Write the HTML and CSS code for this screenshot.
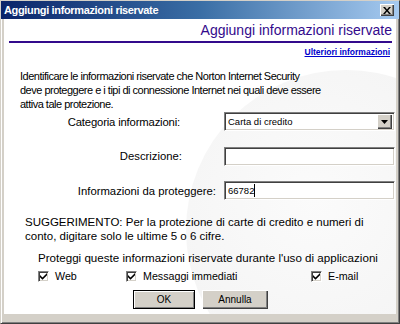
FILE: index.html
```html
<!DOCTYPE html>
<html>
<head>
<meta charset="utf-8">
<link rel="stylesheet" href="styles.css">
</head>
<body>
<div class="window">
  <div class="titlebar">
    <span class="title">Aggiungi informazioni riservate</span>
    <span class="close">
      <svg width="8" height="7" viewBox="0 0 8 7"><path d="M0 0h2l2 2.5L6 0h2L5 3.5 8 7H6L4 4.5 2 7H0l3-3.5z" fill="#000"/></svg>
    </span>
  </div>
  <div class="body">
    <div class="globe"></div>
    <div class="header">
      <h1 class="heading">Aggiungi informazioni riservate</h1>
    </div>
    <div class="more"><a href="#">Ulteriori informazioni</a></div>
    <p class="intro">Identificare le informazioni riservate che Norton Internet Security<br>deve proteggere e i tipi di connessione Internet nei quali deve essere<br>attiva tale protezione.</p>
    <div class="form">
      <div class="row">
        <span class="label label-cat">Categoria informazioni:</span>
        <div class="select">
          <span class="select-text">Carta di credito</span>
          <span class="arrow"><svg width="7" height="4" viewBox="0 0 7 4"><path d="M0 0h7L3.5 4z" fill="#000"/></svg></span>
        </div>
      </div>
      <div class="row">
        <span class="label label-desc">Descrizione:</span>
        <div class="input"></div>
      </div>
      <div class="row">
        <span class="label label-info">Informazioni da proteggere:</span>
        <div class="input"><span class="value">66782</span><span class="caret"></span></div>
      </div>
    </div>
    <p class="hint">SUGGERIMENTO: Per la protezione di carte di credito e numeri di<br>conto, digitare solo le ultime 5 o 6 cifre.</p>
    <p class="apps">Proteggi queste informazioni riservate durante l'uso di applicazioni</p>
    <div class="checks">
      <label class="check check-web"><span class="box"><svg width="7" height="7" viewBox="0 0 7 7"><path d="M0 2l2.5 2.5L7 0v2.2L2.5 6.7 0 4.2z" fill="#000"/></svg></span>Web</label>
      <label class="check check-msg"><span class="box"><svg width="7" height="7" viewBox="0 0 7 7"><path d="M0 2l2.5 2.5L7 0v2.2L2.5 6.7 0 4.2z" fill="#000"/></svg></span>Messaggi immediati</label>
      <label class="check check-mail"><span class="box"><svg width="7" height="7" viewBox="0 0 7 7"><path d="M0 2l2.5 2.5L7 0v2.2L2.5 6.7 0 4.2z" fill="#000"/></svg></span>E-mail</label>
    </div>
    <div class="buttons">
      <button class="btn btn-ok">OK</button>
      <button class="btn btn-cancel">Annulla</button>
    </div>
  </div>
</div>
</body>
</html>
```

FILE: styles.css
```css
* { box-sizing: border-box; }
html, body { margin: 0; padding: 0; }
body {
  width: 400px;
  height: 324px;
  overflow: hidden;
  font-family: "Liberation Sans", Arial, sans-serif;
  font-size: 11px;
  color: #000;
  background: #d4d0c8;
}
.window {
  width: 400px;
  height: 324px;
  border: 1px solid #d4d0c8;
  border-right-color: #404040;
  border-bottom-color: #404040;
  box-shadow: inset 1px 1px 0 #fff, inset -1px -1px 0 #808080;
  padding: 0 3px 9px 3px;
  display: flex;
  flex-direction: column;
  background: #d4d0c8;
}
.titlebar {
  height: 18px;
  margin: 0 -3px;
  padding: 0 5px 0 3px;
  display: flex;
  align-items: center;
  justify-content: space-between;
  background: linear-gradient(to right, #0a246a 0%, #3a6ea5 50%, #a6caf0 100%);
}
.title {
  color: #fff;
  font-weight: bold;
  font-size: 11px;
  letter-spacing: -0.35px;
}
.close {
  width: 14px;
  height: 12px;
  background: #d4d0c8;
  box-shadow: inset 1px 1px 0 #fff, inset -1px -1px 0 #404040, inset -2px -2px 0 #808080;
  display: flex;
  align-items: center;
  justify-content: center;
}
.close svg { display: block; margin-left: -1px; }
.body {
  position: relative;
  flex: 1;
  background: #fff;
  overflow: hidden;
  border-top: 1px solid #fff;
}
.globe {
  position: absolute;
  right: -110px;
  top: 50px;
  width: 320px;
  height: 320px;
  border-radius: 50%;
  background: radial-gradient(circle at 40% 40%, #fbfbfb 0%, #f5f5f5 55%, #f8f8f8 66%, #fff 72%);
}
.header {
  position: relative;
  margin: 0 4px 0 5px;
  border-bottom: 2px solid #330a8c;
  height: 23px;
  display: flex;
  justify-content: flex-end;
  align-items: flex-end;
}
.heading {
  margin: 0 0 2px 0;
  font-weight: normal;
  font-size: 14px;
  color: #330a8c;
  line-height: 18px;
}
.more {
  position: relative;
  text-align: right;
  margin: 4px 6px 0 0;
  font-size: 8.5px;
  font-weight: bold;
  line-height: 11px;
}
.more a { color: #0000cc; }
.intro, .hint, .apps {
  position: relative;
  margin: 0;
  line-height: 14px;
  white-space: nowrap;
}
.intro { margin: 11px 0 0 16px; letter-spacing: -0.5px; }
.form {
  position: relative;
  margin-top: 1px;
  display: flex;
  flex-direction: column;
  gap: 15.5px;
}
.row {
  display: grid;
  grid-template-columns: 220px 171px;
  align-items: center;
  font-size: 11.3px;
}
.label { text-align: right; white-space: nowrap; }
.label-cat { padding-right: 44px; letter-spacing: -0.17px; }
.label-desc { padding-right: 42px; }
.label-info { padding-right: 8px; }
.select, .input {
  height: 19px;
  background: #fff;
  border: 1px solid #808080;
  border-right-color: #fff;
  border-bottom-color: #fff;
  box-shadow: inset 1px 1px 0 #404040, inset -1px -1px 0 #d4d0c8;
  display: flex;
  align-items: center;
  padding-left: 3px;
  font-size: 9.5px;
}
.select { justify-content: space-between; padding-right: 2px; }
.arrow {
  width: 15px;
  height: 15px;
  background: #d4d0c8;
  box-shadow: inset 1px 1px 0 #fff, inset -1px -1px 0 #404040, inset -2px -2px 0 #808080;
  display: flex;
  align-items: center;
  justify-content: center;
}
.caret { width: 1px; height: 13px; background: #000; }
.hint { margin: 15px 0 0 21px; font-size: 11.5px; }
.apps { margin: 8px 0 0 34px; font-size: 11.6px; }
.checks {
  position: relative;
  display: flex;
  margin: 5px 0 0 34px;
  font-size: 10.7px;
}
.check {
  display: flex;
  align-items: center;
  gap: 6px;
}
.check-web { width: 88px; }
.check-msg { width: 185px; }
.box {
  width: 11px;
  height: 11px;
  background: #fff;
  border: 1px solid #808080;
  border-right-color: #fff;
  border-bottom-color: #fff;
  box-shadow: inset 1px 1px 0 #404040, inset -1px -1px 0 #d4d0c8;
  display: flex;
  align-items: center;
  justify-content: center;
}
.buttons {
  position: relative;
  display: flex;
  gap: 7px;
  margin: 8px 0 0 129px;
}
.btn {
  height: 19px;
  font-family: "Liberation Sans", Arial, sans-serif;
  font-size: 10px;
  color: #000;
  background: #d4d0c8;
  border: none;
  box-shadow: inset 0 0 0 1px #000, inset 2px 2px 0 #fff, inset -2px -2px 0 #808080;
  padding: 0;
}
.btn-ok { width: 62px; }
.btn-cancel { width: 66px; box-shadow: inset 1px 1px 0 #fff, inset -1px -1px 0 #404040, inset -2px -2px 0 #808080; }
```
